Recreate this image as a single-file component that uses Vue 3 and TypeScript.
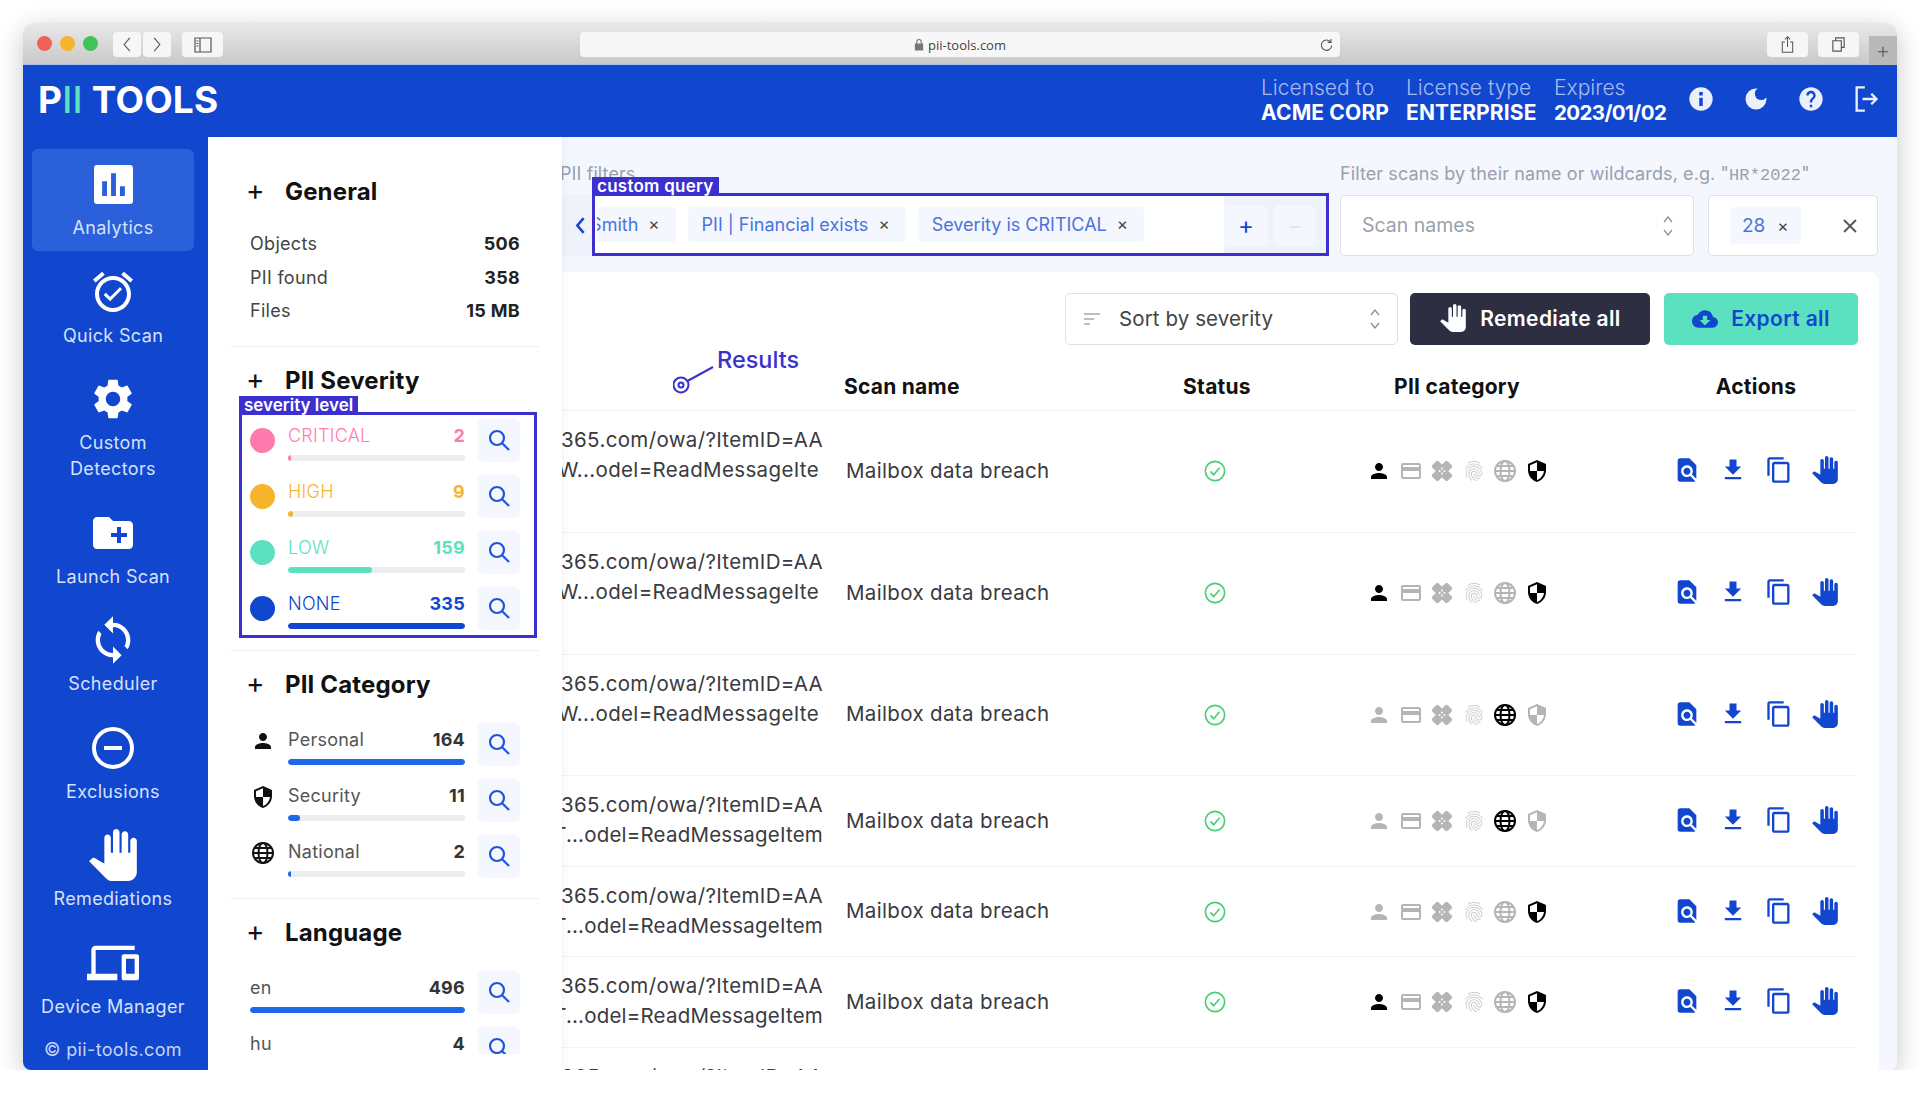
<template>
  <!-- icon sprite -->
  <svg class="sprite" aria-hidden="true">
    <symbol id="i-search" viewBox="0 0 24 24"><g fill="none" stroke="currentColor" stroke-width="2.2"><circle cx="10" cy="10" r="7"/><path d="M15 15l7 7"/></g></symbol>
    <symbol id="i-person" viewBox="0 0 24 24"><path d="M12 12c2.21 0 4-1.79 4-4s-1.79-4-4-4-4 1.79-4 4 1.79 4 4 4zm0 2c-2.67 0-8 1.34-8 4v2h16v-2c0-2.66-5.33-4-8-4z"/></symbol>
    <symbol id="i-card" viewBox="0 0 24 24"><path d="M20 4H4c-1.11 0-1.99.89-1.99 2L2 18c0 1.11.89 2 2 2h16c1.11 0 2-.89 2-2V6c0-1.11-.89-2-2-2zm0 14H4v-6h16v6zm0-10H4V6h16v2z"/></symbol>
    <symbol id="i-bandage" viewBox="0 0 24 24"><rect x="1" y="7.5" width="22" height="9" rx="2" transform="rotate(45 12 12)"/><rect x="1" y="7.5" width="22" height="9" rx="2" transform="rotate(-45 12 12)"/><g fill="#fff"><circle cx="12" cy="9.6" r="1"/><circle cx="12" cy="14.4" r="1"/><circle cx="9.6" cy="12" r="1"/><circle cx="14.4" cy="12" r="1"/></g></symbol>
    <symbol id="i-finger" viewBox="0 0 24 24"><path d="M17.81 4.47c-.08 0-.16-.02-.23-.06C15.66 3.42 14 3 12.01 3c-1.98 0-3.86.47-5.57 1.41-.24.13-.54.04-.68-.2-.13-.24-.04-.55.2-.68C7.82 2.52 9.86 2 12.01 2c2.13 0 3.99.47 6.03 1.52.25.13.34.43.21.67-.09.18-.26.28-.44.28zM3.5 9.72c-.1 0-.2-.03-.29-.09-.23-.16-.28-.47-.12-.7.99-1.4 2.25-2.5 3.75-3.27C9.98 4.04 14 4.03 17.15 5.65c1.5.77 2.76 1.86 3.75 3.25.16.22.11.54-.12.7-.23.16-.54.11-.7-.12-.9-1.26-2.04-2.25-3.39-2.94-2.87-1.47-6.54-1.47-9.4.01-1.36.7-2.5 1.7-3.4 2.96-.08.14-.23.21-.39.21zm6.25 12.07c-.13 0-.26-.05-.35-.15-.87-.87-1.34-1.43-2.01-2.64-.69-1.23-1.05-2.73-1.05-4.34 0-2.97 2.54-5.39 5.66-5.39s5.66 2.42 5.66 5.39c0 .28-.22.5-.5.5s-.5-.22-.5-.5c0-2.42-2.09-4.39-4.66-4.39-2.57 0-4.66 1.97-4.66 4.39 0 1.44.32 2.77.93 3.85.64 1.15 1.08 1.64 1.85 2.42.19.2.19.51 0 .71-.11.1-.24.15-.37.15zm7.17-1.85c-1.19 0-2.24-.3-3.1-.89-1.49-1.01-2.38-2.65-2.38-4.39 0-.28.22-.5.5-.5s.5.22.5.5c0 1.41.72 2.74 1.94 3.56.71.48 1.54.71 2.54.71.24 0 .64-.03 1.04-.1.27-.05.53.13.58.41.05.27-.13.53-.41.58-.57.11-1.07.12-1.21.12zM14.91 22c-.04 0-.09-.01-.13-.02-1.59-.44-2.63-1.03-3.72-2.1-1.4-1.39-2.17-3.24-2.17-5.22 0-1.62 1.38-2.94 3.08-2.94 1.7 0 3.08 1.32 3.08 2.94 0 1.07.93 1.94 2.08 1.94s2.08-.87 2.08-1.94c0-3.77-3.25-6.83-7.25-6.83-2.84 0-5.44 1.58-6.61 4.03-.39.81-.59 1.76-.59 2.8 0 .78.07 2.01.67 3.61.1.26-.03.55-.29.64-.26.1-.55-.04-.64-.29-.49-1.31-.73-2.61-.73-3.96 0-1.2.23-2.29.68-3.24 1.33-2.79 4.28-4.6 7.51-4.6 4.55 0 8.25 3.51 8.25 7.83 0 1.62-1.38 2.94-3.08 2.94s-3.08-1.32-3.08-2.94c0-1.07-.93-1.94-2.08-1.94s-2.08.87-2.08 1.94c0 1.71.66 3.31 1.87 4.51.95.94 1.86 1.46 3.27 1.85.27.07.42.35.35.61-.05.23-.26.38-.47.38z"/></symbol>
    <symbol id="i-globe" viewBox="0 0 24 24"><g fill="none" stroke="currentColor" stroke-width="2"><circle cx="12" cy="12" r="10"/><ellipse cx="12" cy="12" rx="4.5" ry="10"/><path d="M2 12h20M3.5 7h17M3.5 17h17"/></g></symbol>
    <symbol id="i-shield" viewBox="0 0 24 24"><path d="M12 1L3 5v6c0 5.55 3.84 10.74 9 12 5.16-1.26 9-6.45 9-12V5l-9-4zm0 10.99h7c-.53 4.12-3.28 7.79-7 8.94V12H5V6.3l7-3.11v8.8z"/></symbol>
    <symbol id="i-page" viewBox="0 0 24 24"><path d="M20 19.59V8l-6-6H6c-1.1 0-1.99.9-1.99 2L4 20c0 1.1.89 2 1.99 2H18c.45 0 .85-.15 1.19-.4l-4.43-4.43c-.8.52-1.74.83-2.76.83-2.76 0-5-2.24-5-5s2.24-5 5-5 5 2.24 5 5c0 1.02-.31 1.96-.83 2.75L20 19.59zM9 13c0 1.66 1.34 3 3 3s3-1.34 3-3-1.34-3-3-3-3 1.34-3 3z"/></symbol>
    <symbol id="i-download" viewBox="0 0 24 24"><path d="M19 9h-4V3H9v6H5l7 7 7-7zM5 18v2h14v-2H5z"/></symbol>
    <symbol id="i-copy" viewBox="0 0 24 24"><path d="M16 1H4c-1.1 0-2 .9-2 2v14h2V3h12V1zm3 4H8c-1.1 0-2 .9-2 2v14c0 1.1.9 2 2 2h11c1.1 0 2-.9 2-2V7c0-1.1-.9-2-2-2zm0 16H8V7h11v14z"/></symbol>
    <symbol id="i-hand" viewBox="0 0 24 24"><path d="M23 5.5V20c0 2.2-1.8 4-4 4h-7.3c-1.08 0-2.1-.43-2.85-1.19L1 14.83s1.26-1.23 1.3-1.25c.22-.19.49-.29.79-.29.22 0 .42.06.6.16.04.01 4.31 2.46 4.31 2.46V4c0-.83.67-1.5 1.5-1.5S11 3.17 11 4v7h1V1.5c0-.83.67-1.5 1.5-1.5S15 .67 15 1.5V11h1V2.5c0-.83.67-1.5 1.5-1.5s1.5.67 1.5 1.5V11h1V5.5c0-.83.67-1.5 1.5-1.5s1.5.67 1.5 1.5z"/></symbol>
    <symbol id="i-analytics" viewBox="0 0 24 24"><path fill-rule="evenodd" d="M2 0h20a2 2 0 0 1 2 2v20a2 2 0 0 1-2 2H2a2 2 0 0 1-2-2V2a2 2 0 0 1 2-2zM5 10v9h3v-9H5zm5.5-5v14h3V5h-3zM16 13v6h3v-6h-3z"/></symbol>
    <symbol id="i-alarm" viewBox="0 0 24 24"><path d="M7.88 3.39L6.6 1.86 2 5.71l1.29 1.53 4.59-3.85zM22 5.72l-4.6-3.86-1.29 1.53 4.6 3.86L22 5.72zM12 4c-4.97 0-9 4.03-9 9s4.02 9 9 9c4.97 0 9-4.03 9-9s-4.03-9-9-9zm0 16c-3.87 0-7-3.13-7-7s3.13-7 7-7 7 3.13 7 7-3.13 7-7 7zm-1.46-5.47L8.41 12.4l-1.06 1.06 3.18 3.18 6-6-1.06-1.06-4.93 4.95z"/></symbol>
    <symbol id="i-gear" viewBox="0 0 24 24"><path d="M19.14 12.94c.04-.3.06-.61.06-.94 0-.32-.02-.64-.07-.94l2.03-1.58c.18-.14.23-.41.12-.61l-1.92-3.32c-.12-.22-.37-.29-.59-.22l-2.39.96c-.5-.38-1.03-.7-1.62-.94l-.36-2.54c-.04-.24-.24-.41-.48-.41h-3.84c-.24 0-.43.17-.47.41l-.36 2.54c-.59.24-1.13.57-1.62.94l-2.39-.96c-.22-.08-.47 0-.59.22L2.74 8.87c-.12.21-.08.47.12.61l2.03 1.58c-.05.3-.09.63-.09.94s.02.64.07.94l-2.03 1.58c-.18.14-.23.41-.12.61l1.92 3.32c.12.22.37.29.59.22l2.39-.96c.5.38 1.03.7 1.62.94l.36 2.54c.05.24.24.41.48.41h3.84c.24 0 .44-.17.47-.41l.36-2.54c.59-.24 1.13-.56 1.62-.94l2.39.96c.22.08.47 0 .59-.22l1.92-3.32c.12-.22.07-.47-.12-.61l-2.01-1.58zM12 15.6c-1.98 0-3.6-1.62-3.6-3.6s1.62-3.6 3.6-3.6 3.6 1.62 3.6 3.6-1.62 3.6-3.6 3.6z"/></symbol>
    <symbol id="i-folder" viewBox="0 0 24 24"><path d="M20 6h-8l-2-2H4c-1.11 0-1.99.89-1.99 2L2 18c0 1.11.89 2 2 2h16c1.11 0 2-.89 2-2V8c0-1.11-.89-2-2-2zm-1 8h-3v3h-2v-3h-3v-2h3V9h2v3h3v2z"/></symbol>
    <symbol id="i-sync" viewBox="0 0 24 24"><path d="M12 4V1L8 5l4 4V6c3.31 0 6 2.69 6 6 0 1.01-.25 1.97-.7 2.8l1.46 1.46C19.54 15.03 20 13.57 20 12c0-4.42-3.58-8-8-8zm0 14c-3.31 0-6-2.69-6-6 0-1.01.25-1.97.7-2.8L5.24 7.74C4.46 8.97 4 10.43 4 12c0 4.42 3.58 8 8 8v3l4-4-4-4v3z"/></symbol>
    <symbol id="i-minus" viewBox="0 0 24 24"><g fill="none" stroke="currentColor" stroke-width="2"><circle cx="12" cy="12" r="9.5"/><path d="M7.5 12h9"/></g></symbol>
    <symbol id="i-devices" viewBox="0 0 24 24"><path d="M4 6h18V4H4c-1.1 0-2 .9-2 2v11H0v3h14v-3H4V6zm19 2h-6c-.55 0-1 .45-1 1v10c0 .55.45 1 1 1h6c.55 0 1-.45 1-1V9c0-.55-.45-1-1-1zm-1 9h-4v-7h4v7z"/></symbol>
    <symbol id="i-info" viewBox="0 0 24 24"><path d="M12 2a10 10 0 1 0 0 20 10 10 0 0 0 0-20zm1.5 16h-3v-7h3v7zm0-9h-3V6h3v3z"/></symbol>
    <symbol id="i-moon" viewBox="0 0 24 24"><path d="M12 3a9 9 0 1 0 9 9c0-.46-.04-.92-.1-1.36a5.389 5.389 0 0 1-4.4 2.26 5.403 5.403 0 0 1-3.14-9.8c-.44-.06-.9-.1-1.36-.1z"/></symbol>
    <symbol id="i-help" viewBox="0 0 24 24"><path d="M12 2C6.48 2 2 6.48 2 12s4.48 10 10 10 10-4.48 10-10S17.52 2 12 2zm1 17h-2v-2h2v2zm2.07-7.75l-.9.92C13.45 12.9 13 13.5 13 15h-2v-.5c0-1.1.45-2.1 1.17-2.83l1.24-1.26c.37-.36.59-.86.59-1.41 0-1.1-.9-2-2-2s-2 .9-2 2H8c0-2.21 1.79-4 4-4s4 1.79 4 4c0 .88-.36 1.68-.93 2.25z"/></symbol>
    <symbol id="i-logout" viewBox="0 0 24 24"><g fill="none" stroke="currentColor" stroke-width="2"><path d="M11 2H4v20h7M9 12h12M16.5 7.5L21 12l-4.5 4.5"/></g></symbol>
    <symbol id="i-cloud" viewBox="0 0 24 24"><path d="M19.35 10.04C18.67 6.59 15.64 4 12 4 9.11 4 6.6 5.64 5.35 8.04 2.34 8.36 0 10.91 0 14c0 3.31 2.69 6 6 6h13c2.76 0 5-2.24 5-5 0-2.64-2.05-4.78-4.65-4.96zM17 13l-5 5-5-5h3V9h4v4h3z"/></symbol>
    <symbol id="i-updown" viewBox="0 0 12 24"><path d="M2 8l4-5 4 5M2 16l4 5 4-5" fill="none" stroke="currentColor" stroke-width="1.3"/></symbol>
    <symbol id="i-check" viewBox="0 0 24 24"><g fill="none" stroke="currentColor" stroke-width="1.8"><circle cx="12" cy="12" r="10.5"/><path d="M7 12.5l3.5 3.5L17 8.5"/></g></symbol>
  </svg>

  <div class="window">
    <!-- browser chrome -->
    <div class="chrome">
      <div class="lights"><i class="red"></i><i class="amber"></i><i class="green"></i></div>
      <div class="navbtns">
        <button class="cbtn arrow"><svg viewBox="0 0 10 18"><path d="M8 2L2 9l6 7" /></svg></button>
        <button class="cbtn arrow"><svg viewBox="0 0 10 18"><path d="M2 2l6 7-6 7" /></svg></button>
      </div>
      <button class="cbtn side"><svg viewBox="0 0 18 18"><path d="M1 2h16v14H1zM6 2v14M2.5 5h2M2.5 7.5h2M2.5 10h2" /></svg></button>
      <div class="urlbar">
        <span class="address">
          <svg class="lock" viewBox="0 0 10 14"><path d="M2 6V4a3 3 0 0 1 6 0v2h1.5v7.5h-9V6zm1.2 0h3.6V4a1.8 1.8 0 0 0-3.6 0z" /></svg>
          pii-tools.com
        </span>
        <svg class="reload" viewBox="0 0 16 16"><path d="M12.5 5.500A5.500 5.500 0 1 0 13.500 9M12.800 2v3.700H9.200" /></svg>
      </div>
      <button class="cbtn tool first"><svg viewBox="0 0 18 22"><path d="M6 8H3v12h12V8h-3M9 14V2M6 5l3-3 3 3" /></svg></button>
      <button class="cbtn tool"><svg viewBox="0 0 18 18"><path d="M6 5V2h9v10h-3M3 5h9v11H3z" /></svg></button>
      <div class="newtab">+</div>
    </div>

    <!-- app header -->
    <header class="appbar">
      <div class="logo">P<span>II</span> TOOLS</div>
      <div class="license">
        <div v-for="item in license" :key="item.label" class="lic">
          <span>{{ item.label }}</span>
          <strong>{{ item.value }}</strong>
        </div>
      </div>
      <div class="barIcons">
        <svg v-for="ic in ['info', 'moon', 'help', 'logout']" :key="ic" class="barIcon"><use :href="`#i-${ic}`" /></svg>
      </div>
    </header>

    <div class="content">
      <!-- main navigation -->
      <nav class="nav">
        <a v-for="item in navItems" :key="item.label" class="navItem" :class="{ active: item.active }">
          <span class="navIcon"><svg :class="item.cls"><use :href="`#i-${item.icon}`" /></svg></span>
          <span class="navLabel">{{ item.label }}</span>
        </a>
        <div class="copyright">© pii-tools.com</div>
      </nav>

      <!-- facets panel -->
      <aside class="panel">
        <section class="facet">
          <h3><span class="plus">+</span>General</h3>
          <div class="stats">
            <div v-for="s in stats" :key="s.label" class="stat"><span>{{ s.label }}</span><b>{{ s.value }}</b></div>
          </div>
        </section>

        <section class="facet">
          <h3><span class="plus">+</span>PII Severity</h3>
          <div class="rows">
            <div v-for="r in severity" :key="r.label" class="row" :style="{ color: r.color }">
              <span class="lead"><i class="dot"></i></span>
              <div class="meter">
                <div class="meterText"><span class="thin">{{ r.label }}</span><b>{{ r.value }}</b></div>
                <div class="track"><div class="fill" :style="{ width: pct(r.value, 335) }"></div></div>
              </div>
              <button class="find"><svg><use href="#i-search" /></svg></button>
            </div>
            <div class="boxed">
              <span class="boxTab">severity level</span>
            </div>
          </div>
        </section>

        <section class="facet">
          <h3><span class="plus">+</span>PII Category</h3>
          <div class="rows">
            <div v-for="r in category" :key="r.label" class="row">
              <span class="lead"><svg class="leadIcon"><use :href="`#i-${r.icon}`" /></svg></span>
              <div class="meter">
                <div class="meterText"><span>{{ r.label }}</span><b>{{ r.value }}</b></div>
                <div class="track"><div class="fill bright" :style="{ width: pct(r.value, 164) }"></div></div>
              </div>
              <button class="find"><svg><use href="#i-search" /></svg></button>
            </div>
          </div>
        </section>

        <section class="facet last">
          <h3><span class="plus">+</span>Language</h3>
          <div class="rows">
            <div v-for="r in languages" :key="r.label" class="row">
              <div class="meter">
                <div class="meterText"><span>{{ r.label }}</span><b>{{ r.value }}</b></div>
                <div class="track"><div class="fill bright" :style="{ width: pct(r.value, 496) }"></div></div>
              </div>
              <button class="find"><svg><use href="#i-search" /></svg></button>
            </div>
          </div>
        </section>
      </aside>

      <!-- results -->
      <main class="main">
        <div class="filters">
          <div class="queryCol">
            <label class="hint shifted">PII filters</label>
            <div class="query">
              <span class="chev"><svg viewBox="0 0 10 18"><path d="M8 2L2 9l6 7" /></svg></span>
              <div class="chips">
                <span v-for="c in chips" :key="c" class="chip">{{ c }}<em>×</em></span>
              </div>
              <button class="qbtn">+</button>
              <button class="qbtn off">−</button>
              <div class="boxed queryBox"><span class="boxTab">custom query</span></div>
            </div>
          </div>
          <div class="scanCol">
            <label class="hint">Filter scans by their name or wildcards, e.g. "<code>HR*2022</code>"</label>
            <div class="scanRow">
              <div class="select">
                <span>Scan names</span>
                <svg class="updown"><use href="#i-updown" /></svg>
              </div>
              <div class="limit">
                <span class="chip small">28<em>×</em></span>
                <svg class="closeX" viewBox="0 0 16 16"><path d="M2 2l12 12M14 2L2 14" /></svg>
              </div>
            </div>
          </div>
        </div>

        <section class="card">
          <div class="toolbar">
            <div class="sort">
              <svg class="sortIcon" viewBox="0 0 16 12"><path d="M0 1h16M0 6h10M0 11h6" /></svg>
              <span>Sort by severity</span>
              <svg class="updown"><use href="#i-updown" /></svg>
            </div>
            <button class="action dark"><svg class="handIcon"><use href="#i-hand" /></svg>Remediate all</button>
            <button class="action teal"><svg class="cloudIcon"><use href="#i-cloud" /></svg>Export all</button>
          </div>

          <div class="grid head">
            <div></div>
            <div class="hName">Scan name</div>
            <div class="center">Status</div>
            <div class="center">PII category</div>
            <div class="center actionsHead">Actions</div>
          </div>

          <div v-for="(r, i) in results" :key="i" class="grid item" :class="{ tall: r.tall }">
            <div class="urlCell">
              <div class="urlLine">https://outlook.office365.com/owa/?ItemID=AA</div>
              <div class="urlLine" :class="r.tall ? 'cut' : 'tight'">{{ r.tall ? 'AAMkADW...odel=ReadMessageIte' : 'AAMkADT...odel=ReadMessageItem' }}</div>
            </div>
            <div class="nameCell">Mailbox data breach</div>
            <div class="center"><svg class="ok"><use href="#i-check" /></svg></div>
            <div class="cats">
              <svg v-for="c in catIcons" :key="c" class="cat" :class="[`cat-${c}`, { on: r.on.includes(c) }]"><use :href="`#i-${c}`" /></svg>
            </div>
            <div class="acts">
              <svg v-for="a in actIcons" :key="a" class="act"><use :href="`#i-${a}`" /></svg>
            </div>
          </div>

          <!-- annotation pointing at the results table -->
          <div class="callout">
            <svg viewBox="0 0 44 36"><circle cx="8" cy="26" r="7.5" /><circle cx="8" cy="26" r="2.5" /><path d="M14.5 22L40 8" /></svg>
            <span>Results</span>
          </div>
        </section>
      </main>
    </div>
  </div>
</template>

<script setup lang="ts">
interface Meter {
  label: string
  value: number
  color?: string
  icon?: string
}

interface ResultRow {
  tall: boolean
  on: string[]
}

const license = [
  { label: 'Licensed to', value: 'ACME CORP' },
  { label: 'License type', value: 'ENTERPRISE' },
  { label: 'Expires', value: '2023/01/02' },
]

const navItems = [
  { label: 'Analytics', icon: 'analytics', cls: 'nAnalytics', active: true },
  { label: 'Quick Scan', icon: 'alarm', cls: 'n48' },
  { label: 'Custom Detectors', icon: 'gear', cls: 'n48' },
  { label: 'Launch Scan', icon: 'folder', cls: 'n48' },
  { label: 'Scheduler', icon: 'sync', cls: 'n50' },
  { label: 'Exclusions', icon: 'minus', cls: 'n48' },
  { label: 'Remediations', icon: 'hand', cls: 'n50' },
  { label: 'Device Manager', icon: 'devices', cls: 'n50' },
]

const stats = [
  { label: 'Objects', value: '506' },
  { label: 'PII found', value: '358' },
  { label: 'Files', value: '15 MB' },
]

const severity: Meter[] = [
  { label: 'CRITICAL', value: 2, color: '#ff7bad' },
  { label: 'HIGH', value: 9, color: '#f7b52c' },
  { label: 'LOW', value: 159, color: '#5ce1c0' },
  { label: 'NONE', value: 335, color: '#1146cf' },
]

const category: Meter[] = [
  { label: 'Personal', value: 164, icon: 'person' },
  { label: 'Security', value: 11, icon: 'shield' },
  { label: 'National', value: 2, icon: 'globe' },
]

const languages: Meter[] = [
  { label: 'en', value: 496 },
  { label: 'hu', value: 4 },
]

const chips = ['Owner is John Smith', 'PII | Financial exists', 'Severity is CRITICAL']

const catIcons = ['person', 'card', 'bandage', 'finger', 'globe', 'shield']
const actIcons = ['page', 'download', 'copy', 'hand']

const results: ResultRow[] = [
  { tall: true, on: ['person', 'shield'] },
  { tall: true, on: ['person', 'shield'] },
  { tall: true, on: ['globe'] },
  { tall: false, on: ['globe'] },
  { tall: false, on: ['shield'] },
  { tall: false, on: ['person', 'shield'] },
  { tall: false, on: ['person'] },
]

const pct = (value: number, max: number) => `${(value / max) * 100}%`
</script>

<style>
html, body {
  margin: 0;
  background: #fff;
}
</style>

<style scoped>
* {
  box-sizing: border-box;
}

.sprite {
  position: absolute;
  width: 0;
  height: 0;
}

svg {
  fill: currentColor;
}

button {
  font-family: inherit;
  border: 0;
  padding: 0;
}

.window {
  width: 1874px;
  height: 1047px;
  margin: 23px 0 0 23px;
  display: flex;
  flex-direction: column;
  border-radius: 10px 10px 8px 8px;
  overflow: hidden;
  box-shadow: 0 6px 26px rgba(0, 0, 0, 0.22);
  font-family: Inter, "Liberation Sans", sans-serif;
  color: #2b2b2f;
}

/* browser chrome */
.chrome {
  height: 42px;
  flex: none;
  display: flex;
  align-items: flex-start;
  padding-top: 9px;
  background: linear-gradient(#e9e9e9, #c9c9c9);
  border-bottom: 1px solid #a9c0ee;
  position: relative;
}

.lights {
  display: flex;
  gap: 8px;
  margin: 4px 0 0 14px;
}

.lights i {
  width: 15px;
  height: 15px;
  border-radius: 50%;
}

.red { background: #f2605a; }
.amber { background: #f7b52c; }
.green { background: #3fc455; }

.navbtns {
  display: flex;
  gap: 2px;
  margin-left: 15px;
}

.cbtn {
  height: 25px;
  background: #f6f6f6;
  border-radius: 4px;
  display: flex;
  align-items: center;
  justify-content: center;
}

.cbtn svg, .urlbar svg.reload {
  fill: none;
  stroke: #555;
  stroke-width: 1.2;
}

.arrow {
  width: 28px;
}

.arrow svg {
  width: 10px;
  height: 17px;
}

.side {
  width: 41px;
  margin: 0 0 0 11px;
}

.side svg {
  width: 18px;
  height: 18px;
}

.urlbar {
  width: 760px;
  height: 25px;
  margin-left: 357px;
  background: #f7f7f7;
  border-radius: 4px;
  display: flex;
  align-items: center;
  justify-content: center;
  position: relative;
  font-size: 13px;
  color: #444;
  font-family: "Open Sans", sans-serif;
}

.address {
  display: flex;
  align-items: center;
  gap: 4px;
}

.lock {
  width: 10px;
  height: 13px;
  fill: #777;
}

.reload {
  position: absolute;
  right: 6px;
  top: 5px;
  width: 15px;
  height: 15px;
}

.tool {
  width: 41px;
  margin-left: 10px;
}

.tool.first {
  margin-left: 427px;
}

.tool svg {
  width: 17px;
  height: 19px;
}

.newtab {
  position: absolute;
  right: 0;
  top: 13px;
  width: 28px;
  height: 29px;
  background: #b9b9b9;
  color: #666;
  font-size: 22px;
  font-weight: 300;
  text-align: center;
  line-height: 29px;
}

/* header */
.appbar {
  height: 72px;
  flex: none;
  background: #1146cf;
  display: flex;
  align-items: center;
  padding-left: 15px;
  color: #fff;
}

.logo {
  font-size: 37px;
  font-weight: 700;
  letter-spacing: 0.2px;
  margin-top: -4px;
}

.logo span {
  color: #5ce1c0;
  font-weight: 500;
}

.license {
  margin: -2px 0 0 auto;
  display: grid;
  grid-template-columns: 145px 148px 124px;
}

.lic {
  display: flex;
  flex-direction: column;
  font-size: 20px;
  line-height: 25px;
  white-space: nowrap;
}

.lic span {
  color: #a7bbef;
  font-weight: 300;
  font-size: 21px;
}

.lic strong {
  font-weight: 700;
  font-size: 21px;
  letter-spacing: 0.15px;
}

.lic:last-child strong {
  font-size: 20.5px;
  letter-spacing: -0.6px;
}

.barIcons {
  display: flex;
  align-items: center;
  gap: 27px;
  margin: -4px 17px 0 9px;
}

.barIcon {
  width: 28px;
  height: 28px;
  color: #eaf0fd;
}

/* left navigation */
.content {
  flex: 1;
  min-height: 0;
  display: flex;
}

.nav {
  width: 185px;
  flex: none;
  background: #1146cf;
  display: flex;
  flex-direction: column;
  align-items: center;
  gap: 6px;
  padding: 12px 5px 7px 0;
  color: #fff;
}

.navItem {
  width: 162px;
  padding: 13px 0 9.5px;
  display: flex;
  flex-direction: column;
  align-items: center;
  text-align: center;
  border-radius: 6px;
}

.navItem.active {
  background: #2a60da;
}

.navIcon {
  height: 44px;
  display: flex;
  align-items: center;
  justify-content: center;
}

.nAnalytics { width: 39px; height: 39px; }
.n48 { width: 48px; height: 48px; }
.n50 { width: 52px; height: 52px; }

.navLabel {
  margin-top: 9px;
  font-size: 18px;
  line-height: 26px;
  letter-spacing: 0.35px;
  color: #d6e1fb;
  width: 150px;
}

.copyright {
  margin-top: auto;
  font-size: 18px;
  letter-spacing: 0.35px;
  color: #c5d4f7;
  line-height: 26px;
}

/* facets */
.panel {
  width: 354px;
  flex: none;
  background: #fff;
  border-radius: 10px 0 0 0;
  padding-top: 21px;
  overflow: hidden;
  box-shadow: 2px 0 8px rgba(30, 50, 110, 0.05);
  position: relative;
  z-index: 1;
}

.facet {
  margin: 0 22px 0 22px;
  padding: 13px 20px 20px;
  border-bottom: 1px solid #eef0f4;
}

.facet.last {
  border-bottom: 0;
  height: 155px;
  overflow: hidden;
  padding-bottom: 0;
}

h3 {
  margin: 0 0 19px;
  height: 40px;
  line-height: 41px;
  font-size: 24px;
  font-weight: 700;
  letter-spacing: 0.15px;
  color: #111;
  display: flex;
}

.plus {
  width: 39px;
  font-weight: 400;
  font-size: 28px;
  line-height: 39px;
  margin-left: -4px;
}

.stats {
  margin-top: -3px;
  margin-bottom: -2px;
  font-size: 18px;
  letter-spacing: 0.3px;
}

.stat {
  height: 33.5px;
  display: flex;
  align-items: center;
  justify-content: space-between;
  color: #444;
}

.stat b {
  font-weight: 700;
  color: #222;
}

.rows {
  display: flex;
  flex-direction: column;
  gap: 13px;
  position: relative;
}

.row {
  display: flex;
  height: 43px;
  color: #555;
}

.lead {
  width: 38px;
  flex: none;
  display: flex;
  align-items: center;
}

.dot {
  width: 25px;
  height: 25px;
  border-radius: 50%;
  background: currentColor;
}

.leadIcon {
  width: 24px;
  height: 24px;
  color: #111;
  margin: -6px 0 0 1px;
}

.meter {
  flex: 1;
  min-width: 0;
}

.meterText {
  height: 33px;
  display: flex;
  align-items: center;
  justify-content: space-between;
  font-size: 18px;
  letter-spacing: 0.25px;
}

.meterText b {
  font-weight: 700;
  color: inherit;
}

.row:not([style]) .meterText b {
  color: #333;
}

.thin {
  font-weight: 300;
}

.track {
  height: 6px;
  margin-top: 3px;
  border-radius: 3px;
  background: #ebedf0;
  overflow: hidden;
}

.fill {
  height: 100%;
  min-width: 3px;
  border-radius: 3px;
  background: currentColor;
}

.fill.bright {
  background: #1f66ea;
}

.find {
  width: 42px;
  height: 43px;
  flex: none;
  margin-left: 13px;
  background: #f4f7fe;
  border-radius: 5px;
  display: flex;
  align-items: center;
  justify-content: center;
  color: #1f55d6;
}

.find svg {
  width: 24px;
  height: 24px;
}

/* blue annotation frames */
.boxed {
  position: absolute;
  inset: -7px -17px -8px -11px;
  border: 3px solid #3b30cf;
  pointer-events: none;
}

.boxTab {
  position: absolute;
  left: -3px;
  bottom: 100%;
  height: 19px;
  padding: 0 5px;
  background: #3b30cf;
  color: #fff;
  font-size: 17px;
  font-weight: 600;
  line-height: 19px;
  white-space: nowrap;
}

/* main column */
.main {
  flex: 1;
  min-width: 0;
  background: #f4f7fe;
  display: flex;
  flex-direction: column;
  overflow: hidden;
}

.filters {
  display: flex;
  gap: 11px;
  padding: 26px 19px 0 0;
  flex: none;
}

.hint {
  display: block;
  height: 20px;
  line-height: 22px;
  margin-bottom: 12px;
  font-size: 18px;
  letter-spacing: 0.1px;
  color: #9aa0ad;
  white-space: nowrap;
}

.hint.shifted {
  margin-left: -2px;
}

.hint code {
  font-family: "Liberation Mono", monospace;
  font-size: 17px;
}

.queryCol {
  width: 767px;
  flex: none;
}

.query {
  height: 61px;
  position: relative;
  display: flex;
  align-items: center;
  background: #eff2fa;
}

.chev {
  width: 35px;
  height: 100%;
  flex: none;
  display: flex;
  align-items: center;
  justify-content: center;
  padding: 0 4px 0 6px;
  color: #1146cf;
  background: linear-gradient(90deg, #eff2fa 31px, #fff 31px);
}

.chev svg {
  width: 11px;
  height: 19px;
  fill: none;
  stroke: currentColor;
  stroke-width: 2.4;
}

.chips {
  flex: 1;
  min-width: 0;
  height: 100%;
  background: #fff;
  overflow: hidden;
  display: flex;
  align-items: center;
  justify-content: flex-end;
  gap: 12px;
  padding: 0 80px 3px 0;
}

.chip {
  flex: none;
  height: 35px;
  padding: 0 16px 0 14px;
  background: #f4f7fe;
  border-radius: 4px;
  display: flex;
  align-items: center;
  gap: 10px;
  font-size: 18px;
  color: #4a74dc;
  white-space: nowrap;
}

.chip em {
  font-style: normal;
  color: #444;
  font-size: 17px;
}

.qbtn {
  width: 44px;
  height: 42px;
  flex: none;
  background: #f4f7fe;
  color: #1146cf;
  font-size: 24px;
  border-radius: 5px;
  margin-right: 6px;
  position: relative;
}

.qbtn.off {
  color: #dfe5f3;
  margin-right: 13px;
  width: 42px;
}

.queryBox {
  inset: -2px 0 0 30px;
}

.queryBox .boxTab {
  letter-spacing: 0.25px;
}

.scanCol {
  flex: 1;
  min-width: 0;
}

.scanRow {
  display: flex;
  gap: 14px;
  height: 61px;
}

.select, .limit {
  background: #fff;
  border: 1px solid #dde0e6;
  border-radius: 5px;
  display: flex;
  align-items: center;
}

.select {
  flex: 1;
  justify-content: space-between;
  padding: 0 19px 0 21px;
  font-size: 19.5px;
  color: #9aa0ad;
}

.select span {
  margin-top: -2px;
}

.updown {
  width: 12px;
  height: 24px;
  color: #8b8f97;
}

.limit {
  width: 170px;
  flex: none;
  padding: 0 19px 0 21px;
  justify-content: space-between;
}

.chip.small {
  font-size: 19px;
  padding: 0 12px;
  height: 37px;
  gap: 12px;
}

.closeX {
  width: 16px;
  height: 16px;
  fill: none;
  stroke: #555;
  stroke-width: 1.8;
}

/* results card */
.card {
  flex: 1;
  min-height: 0;
  margin: 16px 18px 0 0;
  background: #fff;
  border-radius: 0 10px 0 0;
  overflow: hidden;
  position: relative;
  padding-right: 21px;
}

.toolbar {
  display: flex;
  justify-content: flex-end;
  gap: 12px;
  padding-top: 21px;
  height: 73px;
}

.sort {
  width: 333px;
  border: 1px solid #dde0e6;
  border-radius: 5px;
  display: flex;
  align-items: center;
  padding: 0 16px 0 18px;
  font-size: 20.5px;
  letter-spacing: 0.1px;
  color: #444;
}

.sort span {
  flex: 1;
  margin: -2px 0 0 19px;
}

.sortIcon {
  width: 16px;
  height: 12px;
  fill: none;
  stroke: #aaa;
  stroke-width: 1.6;
}

.action {
  height: 52px;
  border-radius: 5px;
  display: flex;
  align-items: center;
  justify-content: center;
  gap: 13px;
  font-size: 21px;
  font-weight: 600;
  letter-spacing: 0.35px;
  padding-bottom: 2px;
}

.dark {
  width: 240px;
  background: #2d2e42;
  color: #fff;
}

.teal {
  width: 194px;
  margin-left: 2px;
  background: #5ce1c0;
  color: #1146cf;
}

.handIcon {
  width: 28px;
  height: 28px;
}

.cloudIcon {
  width: 26px;
  height: 26px;
  margin-top: 2px;
}

.grid {
  display: grid;
  grid-template-columns: 284px 294px 154px 326px 1fr;
  border-bottom: 1px solid #f1f3f7;
}

.head {
  margin-top: 16px;
  height: 50px;
  padding-top: 2px;
  align-items: center;
  font-size: 21px;
  font-weight: 700;
  letter-spacing: 0.25px;
  color: #111;
}

.hName {
  margin-left: -2px;
}

.center {
  text-align: center;
  display: flex;
  justify-content: center;
  align-items: center;
}

.actionsHead {
  padding-left: 34px;
}

.item {
  height: 90.5px;
  align-items: center;
  font-size: 20.5px;
  letter-spacing: 0.35px;
  color: #3a3a40;
}

.item.tall {
  height: 121.8px;
}

.urlCell {
  align-self: start;
  padding: 14px 20px 0 0;
  overflow: hidden;
  line-height: 30px;
}

.urlLine {
  display: flex;
  justify-content: flex-end;
  white-space: nowrap;
  padding-right: 3px;
}

.urlLine.cut {
  padding-right: 7px;
}

.urlLine.tight {
  letter-spacing: 0.2px;
}

.nameCell {
  margin-top: -2px;
}

.ok {
  width: 22px;
  height: 22px;
  color: #46cf74;
  margin: 0 4px 0 0;
}

.cats {
  display: flex;
  justify-content: center;
  gap: 7.6px;
  padding-left: 2px;
}

.cat {
  width: 24px;
  height: 24px;
  color: #b5b5b5;
}

.cat-finger {
  color: #cfcfcf;
}

.cat.on {
  color: #000;
}

.acts {
  display: flex;
  justify-content: center;
  gap: 18px;
  padding-left: 34px;
  margin-top: -2px;
}

.act {
  width: 28px;
  height: 28px;
  color: #1146cf;
}

.callout {
  position: absolute;
  left: 111px;
  top: 73px;
  display: flex;
  color: #3b30cf;
  font-size: 23.5px;
  font-weight: 500;
}

.callout svg {
  width: 44px;
  height: 36px;
  fill: none;
  stroke: currentColor;
  stroke-width: 2;
  margin-top: 14px;
}
</style>
